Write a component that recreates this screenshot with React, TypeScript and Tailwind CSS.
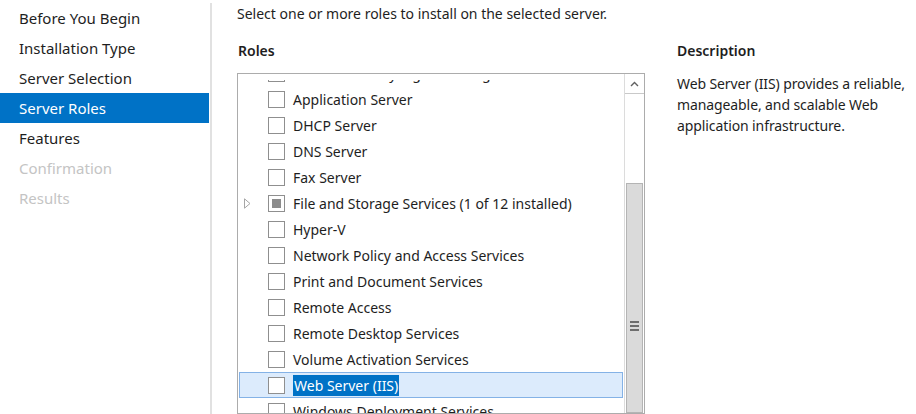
import React from "react";

const FONT = { fontFamily: '"Noto Sans", "Open Sans", sans-serif' };

const STEPS = [
  { label: "Before You Begin", state: "done" },
  { label: "Installation Type", state: "done" },
  { label: "Server Selection", state: "done" },
  { label: "Server Roles", state: "active" },
  { label: "Features", state: "done" },
  { label: "Confirmation", state: "disabled" },
  { label: "Results", state: "disabled" },
];

type Role = { label: string; partial?: boolean; expandable?: boolean; selected?: boolean };

const ROLES: Role[] = [
  { label: "Active Directory Rights Management Services" },
  { label: "Application Server" },
  { label: "DHCP Server" },
  { label: "DNS Server" },
  { label: "Fax Server" },
  { label: "File and Storage Services (1 of 12 installed)", partial: true, expandable: true },
  { label: "Hyper-V" },
  { label: "Network Policy and Access Services" },
  { label: "Print and Document Services" },
  { label: "Remote Access" },
  { label: "Remote Desktop Services" },
  { label: "Volume Activation Services" },
  { label: "Web Server (IIS)", selected: true },
  { label: "Windows Deployment Services" },
  { label: "Windows Server Update Services" },
];

function Checkbox({ partial }: { partial?: boolean }) {
  return (
    <span className="flex h-[17px] w-[17px] shrink-0 items-center justify-center border border-[#8f8f8f] bg-white">
      {partial && <span className="h-[9px] w-[9px] bg-[#8c8c8c]" />}
    </span>
  );
}

function RoleRow({ role }: { role: Role }) {
  return (
    <div
      className={
        "mx-[1px] flex h-[26px] items-center border " +
        (role.selected ? "border-[#84b2e6] bg-[#dcebfc]" : "border-transparent")
      }
    >
      <span className="flex w-[28px] shrink-0 justify-start pl-[4px]">
        {role.expandable && (
          <svg width="7" height="11" viewBox="0 0 7 11">
            <path d="M0.5 0.8 L6 5.5 L0.5 10.2 Z" fill="none" stroke="#a6a6a6" strokeWidth="1" />
          </svg>
        )}
      </span>
      <Checkbox partial={role.partial} />
      <span className="ml-[8px] whitespace-nowrap text-[14px] leading-[19px] text-[#1e1e1e]">
        {role.selected ? (
          <span className="bg-[#0072c6] px-[1px] py-[1px] text-white">{role.label}</span>
        ) : (
          role.label
        )}
      </span>
    </div>
  );
}

function ScrollBar() {
  return (
    <div className="flex w-[20px] shrink-0 flex-col border-l border-[#dcdcdc] bg-white">
      <div className="flex h-[20px] items-center justify-center border-b border-[#c9c9c9]">
        <svg width="9" height="6" viewBox="0 0 9 6">
          <path d="M1 5 L4.5 1.5 L8 5" fill="none" stroke="#606060" strokeWidth="1.4" />
        </svg>
      </div>
      <div className="h-[89px]" />
      <div className="mx-[1px] flex flex-1 flex-col items-center border border-[#b4b4b4] bg-[#dadada] pt-[137px]">
        <div className="flex flex-col gap-[2px]">
          <span className="h-[2px] w-[9px] bg-[#6e6e6e]" />
          <span className="h-[2px] w-[9px] bg-[#6e6e6e]" />
          <span className="h-[2px] w-[9px] bg-[#6e6e6e]" />
        </div>
      </div>
    </div>
  );
}

export default function App() {
  return (
    <div className="flex h-[414px] w-[916px] overflow-hidden bg-white text-[#1e1e1e]" style={FONT}>
      <nav className="mt-[3px] w-[212px] shrink-0 border-r-2 border-[#e1e1e1]">
        {STEPS.map((s) => (
          <div
            key={s.label}
            className={
              "flex h-[30px] items-center pl-[19px] text-[15px] " +
              (s.state === "active"
                ? "mr-[1px] bg-[#0072c6] text-white"
                : s.state === "disabled"
                ? "text-[#c4c4c4]"
                : "text-[#1e1e1e]")
            }
          >
            {s.label}
          </div>
        ))}
      </nav>

      <main className="flex min-w-0 flex-1 pl-[25px]">
        <section className="flex w-[408px] shrink-0 flex-col">
          <p className="mt-[4px] h-[20px] whitespace-nowrap text-[14px] leading-[20px]">
            Select one or more roles to install on the selected server.
          </p>
          <h2 className="mt-[17px] ml-[1px] text-[14px] font-semibold leading-[20px]">Roles</h2>
          <div className="mt-[12px] flex flex-1 overflow-hidden border border-[#acacac]">
            <div className="flex min-w-0 flex-1 flex-col pt-[6px]">
              <div className="flex-1 overflow-hidden">
                <div className="-mt-[20px]">
                  {ROLES.map((r) => (
                    <RoleRow key={r.label} role={r} />
                  ))}
                </div>
              </div>
            </div>
            <ScrollBar />
          </div>
        </section>

        <aside className="ml-[32px] flex flex-col">
          <h2 className="mt-[41px] text-[14px] font-semibold leading-[20px]">Description</h2>
          <p className="mt-[12px] whitespace-nowrap text-[14px] leading-[21px] tracking-[-0.1px]">
            Web Server (IIS) provides a reliable,
            <br />
            manageable, and scalable Web
            <br />
            application infrastructure.
          </p>
        </aside>
      </main>
    </div>
  );
}
